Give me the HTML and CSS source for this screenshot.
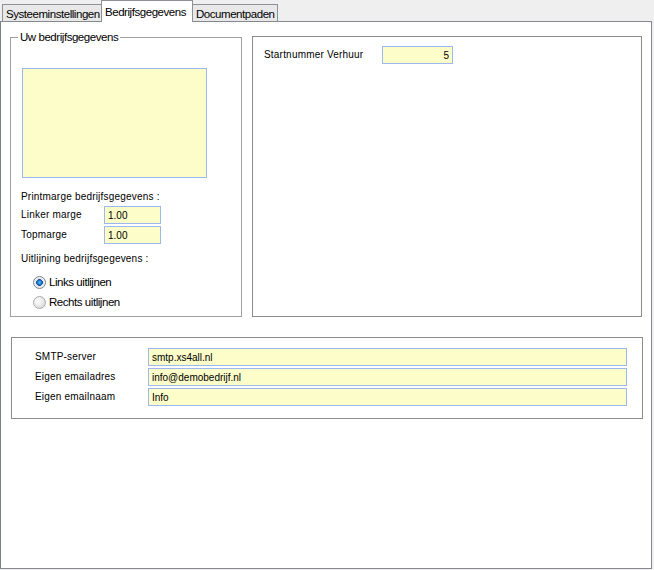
FILE: index.html
```html
<!DOCTYPE html>
<html lang="nl">
<head>
<meta charset="utf-8">
<title>Instellingen</title>
<link rel="stylesheet" href="styles.css">
</head>
<body>
<div class="window">
  <div class="tabs">
    <div class="tab tab-sys">Systeeminstellingen</div>
    <div class="tab tab-active tab-bedrijf">Bedrijfsgegevens</div>
    <div class="tab tab-doc">Documentpaden</div>
  </div>
  <div class="panel">
    <div class="top-row">
      <fieldset class="group group-company">
        <legend class="legend">Uw bedrijfsgegevens</legend>
        <div class="logo-box"></div>
        <div class="label section-label">Printmarge bedrijfsgegevens :</div>
        <div class="field-rows">
          <div class="field-row">
            <span class="label margin-label">Linker marge</span>
            <input class="field field-small" type="text" value="1.00" readonly>
          </div>
          <div class="field-row">
            <span class="label margin-label">Topmarge</span>
            <input class="field field-small" type="text" value="1.00" readonly>
          </div>
        </div>
        <div class="label section-label align-label">Uitlijning bedrijfsgegevens :</div>
        <div class="radios">
          <div class="radio-row"><span class="radio radio-on"></span><span class="radio-text">Links uitlijnen</span></div>
          <div class="radio-row"><span class="radio"></span><span class="radio-text">Rechts uitlijnen</span></div>
        </div>
      </fieldset>
      <div class="group group-rent">
        <div class="field-row">
          <span class="label rent-label">Startnummer Verhuur</span>
          <input class="field field-num" type="text" value="5" readonly>
        </div>
      </div>
    </div>
    <div class="group group-mail">
      <div class="field-row">
        <span class="label mail-label">SMTP-server</span>
        <input class="field field-wide" type="text" value="smtp.xs4all.nl" readonly>
      </div>
      <div class="field-row">
        <span class="label mail-label">Eigen emailadres</span>
        <input class="field field-wide" type="text" value="info@demobedrijf.nl" readonly>
      </div>
      <div class="field-row">
        <span class="label mail-label">Eigen emailnaam</span>
        <input class="field field-wide" type="text" value="Info" readonly>
      </div>
    </div>
  </div>
</div>
</body>
</html>
```

FILE: styles.css
```css
* { box-sizing: border-box; }

html, body {
  margin: 0;
  padding: 0;
  background: #efefef;
}

body {
  font-family: "Liberation Sans", Arial, sans-serif;
  color: #000;
  width: 654px;
  height: 570px;
}

.window {
  display: flex;
  flex-direction: column;
}

.tabs {
  display: flex;
  align-items: flex-end;
  height: 21px;
  padding-left: 2px;
}

.tab {
  height: 17px;
  border: 1px solid #8f9196;
  border-bottom: none;
  background: #e8e8e8;
  font-size: 11.5px;
  letter-spacing: -0.45px;
  line-height: 19px;
  padding-left: 3px;
  white-space: nowrap;
}

.tab-sys { width: 99px; border-right: none; }
.tab-bedrijf { width: 92px; }
.tab-doc { width: 85px; border-left: none; }

.tab-active {
  position: relative;
  height: 22px;
  margin-bottom: -1px;
  background: #fff;
  line-height: 22px;
  padding-left: 3px;
  z-index: 1;
}

.panel {
  width: 652px;
  height: 548px;
  border: 1px solid #858890;
  border-left-color: #7b7f88;
  background: #fff;
}

.top-row {
  display: flex;
  align-items: flex-start;
  gap: 10px;
  padding-left: 9px;
}

.group {
  border: 1px solid #8c8c8c;
}

.group-company {
  margin: 8px 0 0 0;
  width: 232px;
  height: 287px;
  padding: 0 10px 0 10px;
  border: 1px solid #a0a0a0;
  min-width: 0;
}

.legend {
  font-size: 11.5px;
  letter-spacing: -0.45px;
  line-height: 14px;
  padding: 0 2px;
  margin-left: -3px;
}

.logo-box {
  margin: 24px 0 0 1px;
  width: 185px;
  height: 110px;
  background: #fdfdca;
  border: 1px solid #9cb8ee;
}

.label {
  font-size: 10px;
  letter-spacing: 0.2px;
  line-height: 14px;
  white-space: nowrap;
}

.section-label { margin-top: 12px; }
.align-label { margin-top: 8px; }

.field-rows {
  margin-top: 2px;
  display: flex;
  flex-direction: column;
  gap: 2px;
}

.field-row {
  display: flex;
  align-items: center;
  height: 18px;
}

.margin-label { width: 83px; }

.field {
  height: 18px;
  margin: 0;
  border: 1px solid #9cb8ee;
  background: #fdfdca;
  font-family: "Liberation Sans", Arial, sans-serif;
  font-size: 10px;
  color: #000;
  padding: 0 3px;
  outline: none;
}

.field-small { width: 57px; }

.radios {
  margin-top: 8px;
  display: flex;
  flex-direction: column;
  gap: 4px;
}

.radio-row {
  display: flex;
  align-items: center;
  height: 16px;
  padding-left: 12px;
  gap: 3px;
}

.radio {
  width: 13px;
  height: 13px;
  border-radius: 50%;
  border: 1px solid #a9aaae;
  background: radial-gradient(circle at 35% 35%, #ffffff 0%, #e6e6e6 55%, #c8c8c8 100%);
  flex: none;
}

.radio-on {
  border-color: #7a8591;
  background: radial-gradient(circle at 50% 50%, #5ab8f4 0%, #1572c8 30%, #0d4f99 40%, #dcdcdc 44%, #f5f5f5 70%, #bfbfbf 100%);
}

.radio-text {
  font-size: 11.5px;
  letter-spacing: -0.45px;
  line-height: 14px;
}

.group-rent {
  margin-top: 14px;
  width: 390px;
  height: 281px;
  padding: 9px 0 0 11px;
}

.rent-label { width: 118px; }

.field-num {
  width: 71px;
  text-align: right;
}

.group-mail {
  margin: 20px 0 0 10px;
  width: 632px;
  height: 82px;
  padding: 10px 0 0 23px;
  display: flex;
  flex-direction: column;
  gap: 2px;
}

.mail-label { width: 113px; }

.field-wide { width: 479px; }
```
